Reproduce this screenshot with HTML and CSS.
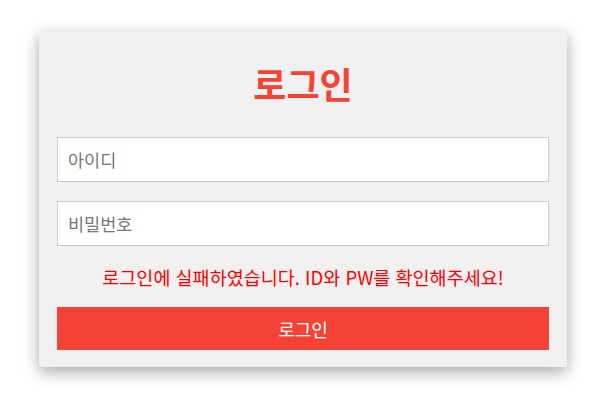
FILE: index.html
```html
<!DOCTYPE html>
<html lang="ko">
<head>
<meta charset="utf-8">
<link rel="stylesheet" href="styles.css">
</head>
<body>
<div class="card">
  <h1 class="title">로그인</h1>
  <input class="field" type="text" placeholder="아이디">
  <input class="field" type="password" placeholder="비밀번호">
  <p class="error">로그인에 실패하였습니다. ID와 PW를 확인해주세요!</p>
  <button class="btn">로그인</button>
</div>
</body>
</html>
```
FILE: styles.css
```css
html, body {
  margin: 0;
  padding: 0;
  background: #ffffff;
}
body {
  padding: 31px 0 44px 39px;
  min-height: 411px;
  box-sizing: border-box;
  font-family: "Noto Sans CJK KR", "Noto Sans", sans-serif;
}
.card {
  box-sizing: border-box;
  width: 528px;
  height: 336px;
  background: #f0f0f0;
  border-radius: 3px;
  box-shadow: 0 5px 16px rgba(0, 0, 0, 0.35);
  padding: 0 18px;
  display: flex;
  flex-direction: column;
}
.title {
  margin: 0;
  height: 106px;
  display: flex;
  align-items: center;
  justify-content: center;
  padding-bottom: 2px;
  box-sizing: border-box;
  font-size: 36px;
  font-weight: bold;
  color: #f44336;
  line-height: 1;
}
.field {
  box-sizing: border-box;
  width: 100%;
  height: 45px;
  margin: 0;
  padding: 0 10px;
  border: 1px solid #cccccc;
  background: #ffffff;
  font-family: inherit;
  font-size: 17.5px;
  color: #333;
  outline: none;
}
.field::placeholder {
  color: #777777;
}
.field + .field {
  margin-top: 19px;
}
.error {
  margin: 0;
  height: 61px;
  display: flex;
  align-items: center;
  justify-content: center;
  color: #ff0000;
  font-size: 18.5px;
}
.btn {
  width: 100%;
  height: 43px;
  margin: 0;
  border: none;
  background: #f44336;
  color: #ffffff;
  font-family: inherit;
  font-size: 18px;
  padding: 0;
}
```
